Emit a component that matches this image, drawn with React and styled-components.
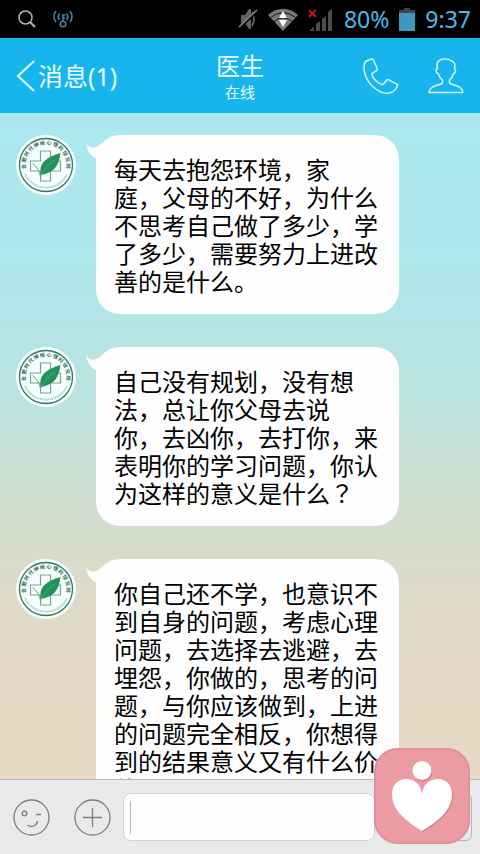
import React, { useState } from 'react';
import styled, { createGlobalStyle } from 'styled-components';

const GlobalStyle = createGlobalStyle`
* {
  box-sizing: border-box;
}
body {
  margin: 0;
  font-family: "Noto Sans", "Noto Sans CJK SC", sans-serif;
}
button {
  padding: 0;
  border: 0;
  background: none;
  font: inherit;
  color: inherit;
  cursor: pointer;
}
svg {
  display: block;
}
`
const Screen = styled.div`
display: flex;
flex-direction: column;
height: 100vh;
overflow: hidden;
background: linear-gradient(#aae8ef 110px, #ade7ed 240px, #b9e4e2 380px, #d6dccd 530px, #e2d9c6 640px, #e6d8c4 780px);
`
const StatusBar = styled.div`
display: flex;
align-items: center;
justify-content: space-between;
height: 38px;
flex: none;
padding: 0 9px 0 18px;
background: #000;
color: #4db9e6;
font-size: 23px;
line-height: 38px;
`
const StatusGroup = styled.div`
display: flex;
align-items: center;
gap: ${(props) => props.$gap}px;
`
const Header = styled.header`
display: grid;
grid-template-columns: 1fr auto 1fr;
align-items: center;
height: 75px;
flex: none;
padding: 0 16px;
background: #18b4ed;
color: #e9ffff;
`
const BackButton = styled.button`
display: flex;
align-items: center;
gap: 3px;
justify-self: start;
font-size: 25px;
line-height: 32px;
`
const Contact = styled.div`
padding-top: 3px;
text-align: center;
`
const Title = styled.h1`
margin: 0;
font-size: 24px;
font-weight: 400;
line-height: 30px;
`
const Presence = styled.p`
margin: 0;
font-size: 15px;
line-height: 22px;
`
const Actions = styled.div`
display: flex;
align-items: center;
justify-content: flex-end;
gap: 29px;
`
const Messages = styled.main`
flex: 1;
min-height: 0;
display: flex;
flex-direction: column;
gap: 33px;
padding: 22px 16px 0;
overflow: hidden;
`
const MessageRow = styled.article`
display: flex;
align-items: flex-start;
flex: none;
gap: 20px;
`
const Bubble = styled.div`
position: relative;
padding: 21px 21px 18px 18px;
border-radius: 24px;
background: #fefefe;
`
const Tail = styled.svg`
position: absolute;
left: -10px;
top: 8px;
`
const Words = styled.p`
margin: 0;
color: #000;
font-size: 24px;
line-height: 28px;
white-space: pre;
`
const CenteredMark = styled.span`
font-family: "Noto Sans CJK TC", sans-serif;
line-height: 1;
`
const InputBar = styled.form`
display: flex;
align-items: center;
height: 75px;
flex: none;
padding: 0 8px 0 13px;
border-top: 1px solid #b7b9b9;
background: #e9ebeb;
`
const RoundButtons = styled.div`
display: flex;
gap: 24px;
margin-right: 12px;
`
const TextBox = styled.input`
flex: 1;
min-width: 0;
height: 48px;
padding: 0 7px;
border: 1px solid #cfd3d4;
border-radius: 8px;
outline: none;
background: ${(props) => (props.$empty
    ? 'linear-gradient(#b4b6b7, #b4b6b7) 6px center / 1px 33px no-repeat #fdfefe'
    : '#fdfefe')};
caret-color: ${(props) => (props.$empty ? 'transparent' : '#b4b6b7')};
font: inherit;
font-size: 24px;
`
const SendButton = styled.button`
width: 88px;
height: 48px;
margin-left: 9px;
border: 1px solid #b3b6b7;
border-radius: 6px;
`
const FloatingButton = styled.button`
position: fixed;
right: 10px;
bottom: 10px;
width: 96px;
height: 96px;
border-radius: 24px;
background: #ed9ba2;
box-shadow: inset 0 0 3px #b9757c;
`

const messages = [
  {
    id: 1,
    text: '每天去抱怨环境，家\n庭，父母的不好，为什么\n不思考自己做了多少，学\n了多少，需要努力上进改\n善的是什么。',
  },
  {
    id: 2,
    text: '自己没有规划，没有想\n法，总让你父母去说\n你，去凶你，去打你，来\n表明你的学习问题，你认\n为这样的意义是什么',
    mark: '？',
  },
  {
    id: 3,
    text: '你自己还不学，也意识不\n到自身的问题，考虑心理\n问题，去选择去逃避，去\n埋怨，你做的，思考的问\n题，与你应该做到，上进\n的问题完全相反，你想得\n到的结果意义又有什么价\n值',
  },
];

const ringText = '合肥时代神经心理科研究院'.split('');

function Avatar() {
  return (
    <svg width="60" height="60" viewBox="0 0 60 60" role="img" aria-label="医生">
      <circle cx="30" cy="30" r="30" fill="#f6fffd" />
      <circle cx="30" cy="30" r="26.5" fill="none" stroke="#35775c" strokeWidth="1.3" />
      <g fill="#2f6e54" fontSize="5" fontWeight="700" textAnchor="middle">
        {ringText.map((char, i) => (
          <text key={char} x="30" y="9.500" transform={`rotate(${-94 + i * 17} 30 30)`}>{char}</text>
        ))}
      </g>
      <path d="M9 39a23 23 0 0 0 42 0" fill="none" stroke="#9dc2b3" strokeWidth="1.800" strokeDasharray="1 .7" />
      <path d="M24.500 16h10v10h10v10h-10v10h-10V36h-10V26h10z" fill="none" stroke="#7ba392" strokeWidth="1.200" />
      <path d="M25 40c-3-12 6-18 19.500-22C43 30 39 37 25 40z" fill="#23915a" />
      <path d="M16.500 28.500c4 3 7 7 8 13 3-7 8-12 14-17" fill="none" stroke="#57a67e" strokeWidth="1" />
    </svg>
  );
}

function SearchIcon() {
  return (
    <svg width="18" height="18" viewBox="0 0 18 18" fill="none" stroke="#b5b5b5" strokeWidth="1.500">
      <circle cx="7.500" cy="7.500" r="6.500" />
      <path d="M12 12l5 5" strokeWidth="2" />
    </svg>
  );
}

function HotspotIcon() {
  return (
    <svg width="20" height="18" viewBox="0 0 20 18" fill="none" stroke="#437fa8" strokeWidth="1.600">
      <circle cx="10" cy="14" r="2.800" />
      <path d="M10 11V4M10 5h2.500M10 8h2M6.500 3.500c-1.700 2-1.700 4.500 0 6.500M13.500 3.500c1.700 2 1.700 4.500 0 6.500M3 1C.3 4 .3 9 3 12M17 1c2.700 3 2.700 8 0 11" />
    </svg>
  );
}

function MutedIcon() {
  return (
    <svg width="20" height="22" viewBox="0 0 20 22">
      <path d="M3 7h4l4-6h2v20h-2l-4-6H3z" fill="#646464" />
      <path d="M14 4c2.500 4 2.500 10 0 14" fill="none" stroke="#646464" strokeWidth="1.800" />
      <path d="M1 20L19 3" stroke="#000" strokeWidth="3" />
      <path d="M1 19L19 2" stroke="#858585" strokeWidth="1.600" />
    </svg>
  );
}

function WifiIcon() {
  return (
    <svg width="30" height="23" viewBox="0 0 30 23">
      <path d="M0 7Q15-5.500 30 7L15 23z" fill="#7b7b7b" />
      <path d="M2.500 9.500Q15-.5 27.500 9.500M6 13.500Q15 6 24 13.500" fill="none" stroke="#111" strokeWidth="1" />
      <path d="M15 3l4 7h-8zM15 19l-4-7h8z" fill="#fff" />
    </svg>
  );
}

function SignalIcon() {
  return (
    <svg width="26" height="23" viewBox="0 0 26 23">
      <path d="M1 23l5-4v4zM8 16l4-3v10H8zM14 11l4-3v15h-4zM20 4l4-3v22h-4z" fill="#4c4c4c" />
      <path d="M1 2l7 7M8 2L1 9" stroke="#b91520" strokeWidth="1.800" />
    </svg>
  );
}

function BatteryIcon() {
  return (
    <svg width="16" height="23" viewBox="0 0 16 23">
      <path d="M5 0h6v2h5v4H0V2h5z" fill="#3f4548" />
      <path d="M0 5h16v18H0z" fill="#3c98bd" />
    </svg>
  );
}

function PhoneIcon() {
  return (
    <svg width="36" height="36" viewBox="0 0 36 36" fill="none" stroke="#d2f7ff" strokeWidth="1.500" strokeLinejoin="round">
      <path d="M3.500 3L8.500 1q1.300-.4 1.800.8l3.900 8.700q.4 1-.5 1.800l-4 2.900q-1.200 1-.6 2.400 3 6 9.500 8.800 1.400.5 2.200-.6l2.700-3.600q.9-1.100 2.200-.4l8.200 4.300q1 .7.500 1.800c-2.600 6.200-8.400 8.500-14.900 6.700C9 30.800 1.500 20.500 1 10.500.9 7 1.500 4.200 3.500 3z" />
    </svg>
  );
}

function PersonIcon() {
  return (
    <svg width="36" height="36" viewBox="0 0 36 36" fill="none" stroke="#d2f7ff" strokeWidth="1.500" strokeLinejoin="round">
      <path d="M9.500 10.500c-.8-3.500-.6-7 1.500-7.500 1.500-2 9-3 11.500-.5 4 .5 5 4 4 8.500 1.800.2 1 4.300-1 4.800-.8 2.800-2 4.700-4 6.200v3c2 2.800 12.500 1.500 13.500 9.500H1c1-8 11.500-6.700 13.500-9.500v-3c-2-1.500-3.400-3.400-4.200-6.200-2.300-.5-3-4.300-.8-5.300z" />
    </svg>
  );
}

function App() {
  const [text, setText] = useState('');

  const handleSubmit = (event) => {
    event.preventDefault();
    setText('');
  };

  return (
    <Screen>
      <GlobalStyle />
      <StatusBar>
        <StatusGroup $gap={17}>
          <SearchIcon />
          <HotspotIcon />
        </StatusGroup>
        <StatusGroup $gap={10}>
          <MutedIcon />
          <WifiIcon />
          <SignalIcon />
          <span>80%</span>
          <BatteryIcon />
          <span>9:37</span>
        </StatusGroup>
      </StatusBar>

      <Header>
        <BackButton type="button">
          <svg width="19" height="34" viewBox="0 0 19 34" fill="none" stroke="currentColor" strokeWidth="2">
            <path d="M18 2L2 17l16 15" />
          </svg>
          消息(1)
        </BackButton>
        <Contact>
          <Title>医生</Title>
          <Presence>在线</Presence>
        </Contact>
        <Actions>
          <button type="button" aria-label="电话"><PhoneIcon /></button>
          <button type="button" aria-label="资料"><PersonIcon /></button>
        </Actions>
      </Header>

      <Messages>
        {messages.map((message) => (
          <MessageRow key={message.id}>
            <Avatar />
            <Bubble>
              <Tail width="24" height="16" viewBox="0 0 24 16">
                <path d="M0 1c5 5 10 5 16-1l7 9-13 6C5 13 2 9 0 1z" fill="#fefefe" />
              </Tail>
              <Words>
                {message.text}
                {message.mark && <CenteredMark lang="zh-TW">{message.mark}</CenteredMark>}
              </Words>
            </Bubble>
          </MessageRow>
        ))}
      </Messages>

      <InputBar onSubmit={handleSubmit}>
        <RoundButtons>
          <button type="button" aria-label="表情">
            <svg width="37" height="37" viewBox="0 0 37 37" fill="none" stroke="#7b7e7f" strokeWidth="1.300">
              <circle cx="18.500" cy="18.500" r="17.500" />
              <circle cx="11.500" cy="14.500" r="2.300" />
              <path d="M23 15.500h5M14.500 26c4 3 9 1 10-4" />
            </svg>
          </button>
          <button type="button" aria-label="更多">
            <svg width="37" height="37" viewBox="0 0 37 37" fill="none" stroke="#7b7e7f" strokeWidth="1.300">
              <circle cx="18.500" cy="18.500" r="17.500" />
              <path d="M18.500 9v19M9 18.500h19" />
            </svg>
          </button>
        </RoundButtons>
        <TextBox
          aria-label="输入消息"
          value={text}
          $empty={text === ''}
          onChange={(event) => setText(event.target.value)}
        />
        <SendButton type="submit" aria-label="发送" />
      </InputBar>

      <FloatingButton type="button" aria-label="爱心">
        <svg width="96" height="96" viewBox="0 0 96 96">
          <g fill="#b9757c" opacity=".6" transform="translate(1 1)">
            <circle cx="48" cy="23" r="9.500" />
            <path d="M48 46C47 35 39 31 32 31 23 31 18 38 18 46c0 17 15 28 30 37 15-9 30-20 30-37 0-8-5-15-14-15-7 0-15 4-16 15z" />
          </g>
          <g fill="#fff">
            <circle cx="48" cy="22.500" r="9.500" />
            <path d="M48 46C47 35 39 31 32 31 23 31 18 38 18 46c0 17 15 28 30 37 15-9 30-20 30-37 0-8-5-15-14-15-7 0-15 4-16 15z" />
          </g>
        </svg>
      </FloatingButton>
    </Screen>
  );
}

export default App;
